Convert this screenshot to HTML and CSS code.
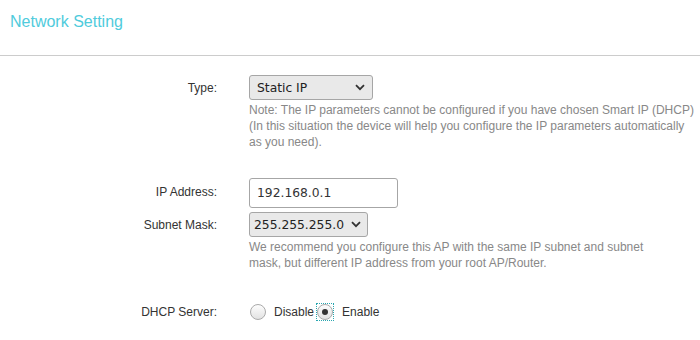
FILE: index.html
```html
<!DOCTYPE html>
<html lang="en">
<head>
    <meta charset="UTF-8">
    <title>Network Setting</title>
    <link rel="stylesheet" href="styles.css">
</head>
<body>
    <div class="header">
        <h1>Network Setting</h1>
    </div>

    <div class="form">
        <div class="row">
            <label class="label">Type:</label>
            <div class="field">
                <select class="select select-type">
                    <option>Static IP</option>
                </select>
                <p class="note">Note: The IP parameters cannot be configured if you have chosen Smart IP (DHCP) (In this situation the device will help you configure the IP parameters automatically as you need).</p>
            </div>
        </div>

        <div class="row row-ip">
            <label class="label">IP Address:</label>
            <div class="field">
                <input class="text" type="text" value="192.168.0.1">
            </div>
        </div>

        <div class="row row-mask">
            <label class="label">Subnet Mask:</label>
            <div class="field">
                <select class="select select-mask">
                    <option>255.255.255.0</option>
                </select>
                <p class="note">We recommend you configure this AP with the same IP subnet and subnet mask, but different IP address from your root AP/Router.</p>
            </div>
        </div>

        <div class="row row-dhcp">
            <label class="label">DHCP Server:</label>
            <div class="field radios">
                <span class="radio"></span>
                <span class="radio-text">Disable</span>
                <span class="focus"><span class="radio"><span class="dot"></span></span></span>
                <span class="radio-text">Enable</span>
            </div>
        </div>
    </div>
</body>
</html>
```

FILE: styles.css
```css
body {
    margin: 0;
    background: #fff;
    font-family: "Liberation Sans", Arial, sans-serif;
    color: #333;
}
.header {
    box-sizing: border-box;
    height: 56px;
    padding: 13px 10px 0;
    border-bottom: 1px solid #cccccc;
}
.header h1 {
    margin: 0;
    font-size: 16px;
    font-weight: normal;
    line-height: 18px;
    color: #4fcbdc;
}
.form { padding-top: 19px; }
.row {
    display: grid;
    grid-template-columns: 217px 1fr;
    column-gap: 32px;
    align-items: start;
}
.label {
    font-size: 12px;
    line-height: 26px;
    text-align: right;
}
.select {
    appearance: none;
    -webkit-appearance: none;
    box-sizing: border-box;
    height: 25px;
    margin: 0;
    padding: 0 24px 0 7px;
    font-family: "DejaVu Sans", sans-serif;
    font-size: 12.3px;
    color: #222;
    border: 1px solid #a6a6a6;
    border-radius: 3px;
    background-color: #e9e9e9;
    background-image: url("data:image/svg+xml,%3Csvg xmlns='http://www.w3.org/2000/svg' width='10' height='7'%3E%3Cpath d='M1 1.2 5 5.2 9 1.2' fill='none' stroke='%23333' stroke-width='1.8'/%3E%3C/svg%3E");
    background-repeat: no-repeat;
    background-position: right 7px center;
}
.select-type { width: 124px; }
.select-mask {
    width: 119px;
    padding: 0 12px 0 4px;
    background-position: right 6px center;
}
.note {
    margin: 2px 0 0;
    max-width: 450px;
    font-size: 12px;
    line-height: 16px;
    color: #888;
}
.row-ip { margin-top: 28px; }
.row-ip .label { line-height: 29px; }
.text {
    box-sizing: border-box;
    width: 149px;
    height: 30px;
    margin: 0;
    padding: 0 7px;
    font-family: "DejaVu Sans", sans-serif;
    font-size: 12.3px;
    color: #333;
    border: 1px solid #a6a6a6;
    border-radius: 3px;
    outline: none;
}
.row-mask { margin-top: 4px; }
.row-mask .note { max-width: 410px; }
.row-dhcp { margin-top: 28px; align-items: center; }
.radios {
    display: flex;
    align-items: center;
    height: 26px;
    font-size: 12px;
}
.radio {
    box-sizing: border-box;
    display: flex;
    align-items: center;
    justify-content: center;
    width: 16px;
    height: 16px;
    margin-left: 1px;
    border: 1px solid #aaa;
    border-radius: 50%;
    background: linear-gradient(#fdfdfd, #e2e2e2);
}
.focus {
    display: flex;
    margin-left: 2px;
    border: 1px dotted #2aa6b0;
}
.focus .radio { margin-left: 0; }
.dot {
    width: 6px;
    height: 6px;
    border-radius: 50%;
    background: #333;
}
.radio-text { margin-left: 8px; }
```
